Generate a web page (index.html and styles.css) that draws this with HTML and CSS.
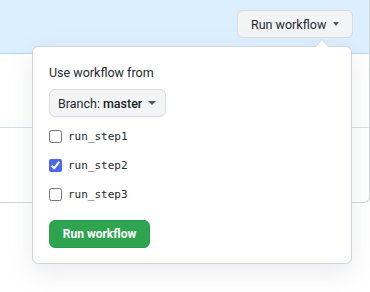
FILE: index.html
```html
<!DOCTYPE html>
<html lang="en">
<head>
  <meta charset="UTF-8">
  <title>Run workflow</title>
  <link rel="stylesheet" href="styles.css">
</head>
<body>
  <div class="runs-box">
    <!-- Header band with the trigger button -->
    <div class="runs-head">
      <button class="btn btn-top">Run workflow <span class="caret"></span></button>
    </div>
    <div class="runs-row"></div>
    <div class="runs-row"></div>
  </div>

  <!-- Dropdown menu -->
  <div class="popover">
    <p class="popover-label">Use workflow from</p>
    <button class="btn btn-branch">Branch: <b>master</b> <span class="caret"></span></button>

    <label class="step"><input type="checkbox"> <span>run_step1</span></label>
    <label class="step"><input type="checkbox" checked> <span>run_step2</span></label>
    <label class="step"><input type="checkbox"> <span>run_step3</span></label>

    <button class="btn btn-green">Run workflow</button>
  </div>
</body>
</html>
```

FILE: styles.css
```css
body {
  margin: 0;
  font-family: Roboto, "Liberation Sans", sans-serif;
  color: #24292e;
  background-color: #fff;
  overflow: hidden;
  height: 292px;
  position: relative;
}
.runs-box {
  margin-left: -20px;
  width: 388px;
  border: 1px solid #d1d5da;
  border-top: none;
  border-radius: 0 0 6px 6px;
}
.runs-head {
  height: 54px;
  background-color: #dcefff;
  border-bottom: 1px solid #b3d7f5;
  display: flex;
  justify-content: flex-end;
  align-items: flex-start;
  padding-top: 10px;
  padding-right: 16px;
  box-sizing: border-box;
}
.runs-row {
  height: 73px;
  border-bottom: 1px solid #d8dde3;
}
.runs-row:last-child {
  border-bottom: none;
  height: 74px;
}
.btn {
  font-family: inherit;
  font-size: 12.5px;
  color: #24292e;
  background-color: #f3f4f6;
  border: 1px solid #d9dcdf;
  border-radius: 6px;
  cursor: pointer;
  display: inline-flex;
  align-items: center;
  white-space: nowrap;
  box-sizing: border-box;
}
.btn-top {
  height: 28px;
  width: 116px;
  padding: 0 13px;
  font-size: 12.5px;
}
.btn-top .caret {
  margin-left: auto;
  border-left-width: 3.5px;
  border-right-width: 3.5px;
}
.caret {
  display: inline-block;
  width: 0;
  height: 0;
  border-left: 4px solid transparent;
  border-right: 4px solid transparent;
  border-top: 4px solid #555;
}
.popover {
  position: absolute;
  left: 32px;
  top: 46px;
  width: 320px;
  height: 218px;
  box-sizing: border-box;
  padding: 16px;
  background-color: #fff;
  border: 1px solid #d1d5da;
  border-radius: 6px;
  box-shadow: 0 8px 24px rgba(149, 157, 165, 0.2);
}
.popover::before,
.popover::after {
  content: "";
  position: absolute;
  right: 22px;
  border: 7px solid transparent;
  border-top: none;
}
.popover::before {
  top: -8px;
  border-bottom: 8px solid #d1d5da;
}
.popover::after {
  top: -7px;
  border-bottom: 8px solid #fff;
}
.popover-label {
  margin: 0 0 6px;
  font-size: 12.5px;
  line-height: 20px;
}
.btn-branch {
  height: 28px;
  width: 117px;
  padding: 0 9px 0 8px;
  margin-bottom: 5px;
}
.btn-branch b {
  font-weight: 500;
  color: #1b1f23;
  margin-left: 3px;
}
.btn-branch .caret {
  margin-left: auto;
}
.step {
  display: flex;
  align-items: center;
  height: 29px;
  font-family: "DejaVu Sans Mono", monospace;
  font-size: 11px;
}
.step input {
  margin: 0 6px 0 0;
  width: 13px;
  height: 13px;
  accent-color: #4a68ee;
}
.btn-green {
  margin-top: 11px;
  height: 28px;
  width: 101px;
  justify-content: center;
  background-color: #2ea44f;
  border-color: #2b9a4a;
  color: #fff;
  font-weight: 700;
  font-size: 12px;
}
```
